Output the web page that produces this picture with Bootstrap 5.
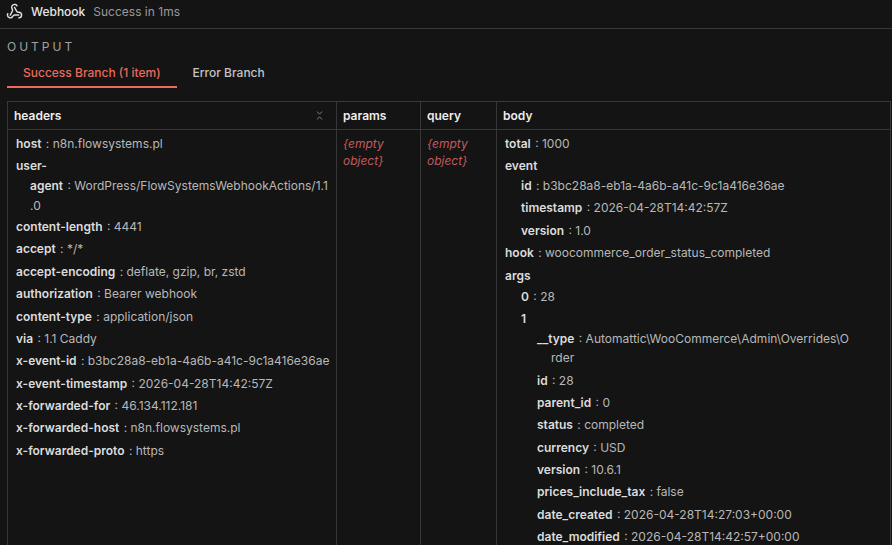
<!DOCTYPE html>
<html lang="en">
<head>
  <meta charset="UTF-8">
  <meta name="viewport" content="width=device-width, initial-scale=1.0">
  <title>Webhook output</title>
  <link href="https://cdn.jsdelivr.net/npm/bootstrap@5.3.2/dist/css/bootstrap.min.css" rel="stylesheet">
  <style>
    html, body { height: 100%; overflow: hidden; }
    body { background: #141414; color: #b8b8b8; font-family: Inter, "Liberation Sans", sans-serif; font-size: 12px; }
    .top-bar { height: 29px; padding: 0 7px 5px 6px; border-bottom: 1px solid #383838; gap: 8px; }
    .top-bar strong { color: #e6e6e6; font-weight: 500; }
    .top-bar .run-info { color: #9a9a9a; }
    .output-label { color: #a3a3a3; font-size: 12px; letter-spacing: 3px; line-height: 14px; padding: 11px 7px 0; }
    .out-tabs { margin: 2px 0 0 7px; height: 32px; }
    .out-tabs .nav-link { padding: 9px 16px 0; height: 32px; color: #c4c4c4; font-size: 12px; font-weight: 500; line-height: 15px; border-bottom: 2px solid transparent; }
    .out-tabs .nav-link.active { color: #ea6a5c; border-bottom-color: #ea6a5c; }
    .table-wrap { margin: 13px 2px 0 7px; }
    .out-table { --bs-table-bg: transparent; --bs-table-color: #b8b8b8; --bs-table-border-color: #383838; table-layout: fixed; width: 883px; margin: 0; font-size: 12px; }
    .out-table th { height: 28px; padding: 0 6px; color: #ededed; font-weight: 600; vertical-align: middle; }
    .out-table td { padding: 4px 6px 0 8px; vertical-align: top; height: 420px; }
    .out-table td.empty-cell { padding-left: 6px; padding-top: 5px; color: #c25a5c; font-style: italic; line-height: 17px; }
    .kv { padding-left: 14px; text-indent: -14px; line-height: 19.6px; margin-bottom: 2.8px; }
    .kv b { color: #dcdcdc; font-weight: 600; margin-right: 1px; }
    .kv-parent { margin-bottom: 0; }
    .kv-args { margin-bottom: 1.4px; }
    .kv-wrap { margin-bottom: 1.8px; }
    .in-1 { margin-left: 16px; }
    .in-2 { margin-left: 32px; }
    .col-icon { color: #8a8a8a; margin-right: 5px; }
  </style>
</head>
<body>
  <div class="top-bar d-flex align-items-center">
    <svg width="17" height="17" viewBox="0 0 24 24" fill="none" stroke="#e0e0e0" stroke-width="2" stroke-linecap="round" stroke-linejoin="round">
      <path d="M18 16.98h-5.99c-1.1 0-1.95.94-2.48 1.9A4 4 0 0 1 2 17c.01-.7.2-1.4.57-2"/>
      <path d="m6 17 3.13-5.78c.53-.97.1-2.18-.5-3.1a4 4 0 1 1 6.89-4.06"/>
      <path d="m12 6 3.13 5.73C15.66 12.7 16.9 13 18 13a4 4 0 0 1 0 8"/>
    </svg>
    <strong>Webhook</strong>
    <span class="run-info">Success in 1ms</span>
  </div>

  <div class="output-label">OUTPUT</div>
  <ul class="nav out-tabs">
    <li class="nav-item"><a class="nav-link active" href="#">Success Branch (1 item)</a></li>
    <li class="nav-item"><a class="nav-link" href="#">Error Branch</a></li>
  </ul>

  <div class="table-wrap">
    <table class="table table-bordered out-table">
      <colgroup><col style="width:329px"><col style="width:84px"><col style="width:76px"><col style="width:394px"></colgroup>
      <thead>
        <tr>
          <th>
            <div class="d-flex justify-content-between align-items-center">
              <span>headers</span>
              <svg class="col-icon" width="11" height="11" viewBox="0 0 24 24" fill="none" stroke="currentColor" stroke-width="2" stroke-linecap="round" stroke-linejoin="round"><path d="m7 20 5-5 5 5"/><path d="m7 4 5 5 5-5"/></svg>
            </div>
          </th>
          <th>params</th>
          <th>query</th>
          <th>body</th>
        </tr>
      </thead>
      <tbody>
        <tr>
          <td>
            <div class="kv"><b>host</b> : n8n.flowsystems.pl</div>
            <div class="kv kv-wrap"><b>user-<br>agent</b> : WordPress/FlowSystemsWebhookActions/1.1<br>.0</div>
            <div class="kv"><b>content-length</b> : 4441</div>
            <div class="kv"><b>accept</b> : */*</div>
            <div class="kv"><b>accept-encoding</b> : deflate, gzip, br, zstd</div>
            <div class="kv"><b>authorization</b> : Bearer webhook</div>
            <div class="kv"><b>content-type</b> : application/json</div>
            <div class="kv"><b>via</b> : 1.1 Caddy</div>
            <div class="kv"><b>x-event-id</b> : b3bc28a8-eb1a-4a6b-a41c-9c1a416e36ae</div>
            <div class="kv"><b>x-event-timestamp</b> : 2026-04-28T14:42:57Z</div>
            <div class="kv"><b>x-forwarded-for</b> : 46.134.112.181</div>
            <div class="kv"><b>x-forwarded-host</b> : n8n.flowsystems.pl</div>
            <div class="kv"><b>x-forwarded-proto</b> : https</div>
          </td>
          <td class="empty-cell">{empty object}</td>
          <td class="empty-cell">{empty object}</td>
          <td>
            <div class="kv"><b>total</b> : 1000</div>
            <div class="kv kv-parent"><b>event</b></div>
            <div class="kv in-1"><b>id</b> : b3bc28a8-eb1a-4a6b-a41c-9c1a416e36ae</div>
            <div class="kv in-1"><b>timestamp</b> : 2026-04-28T14:42:57Z</div>
            <div class="kv in-1"><b>version</b> : 1.0</div>
            <div class="kv"><b>hook</b> : woocommerce_order_status_completed</div>
            <div class="kv kv-args"><b>args</b></div>
            <div class="kv in-1"><b>0</b> : 28</div>
            <div class="kv kv-parent in-1"><b>1</b></div>
            <div class="kv in-2"><b>__type</b> : Automattic\WooCommerce\Admin\Overrides\O<br>rder</div>
            <div class="kv in-2"><b>id</b> : 28</div>
            <div class="kv in-2"><b>parent_id</b> : 0</div>
            <div class="kv in-2"><b>status</b> : completed</div>
            <div class="kv in-2"><b>currency</b> : USD</div>
            <div class="kv in-2"><b>version</b> : 10.6.1</div>
            <div class="kv in-2"><b>prices_include_tax</b> : false</div>
            <div class="kv in-2"><b>date_created</b> : 2026-04-28T14:27:03+00:00</div>
            <div class="kv in-2"><b>date_modified</b> : 2026-04-28T14:42:57+00:00</div>
          </td>
        </tr>
      </tbody>
    </table>
  </div>

  <script src="https://cdn.jsdelivr.net/npm/bootstrap@5.3.2/dist/js/bootstrap.bundle.min.js"></script>
</body>
</html>
